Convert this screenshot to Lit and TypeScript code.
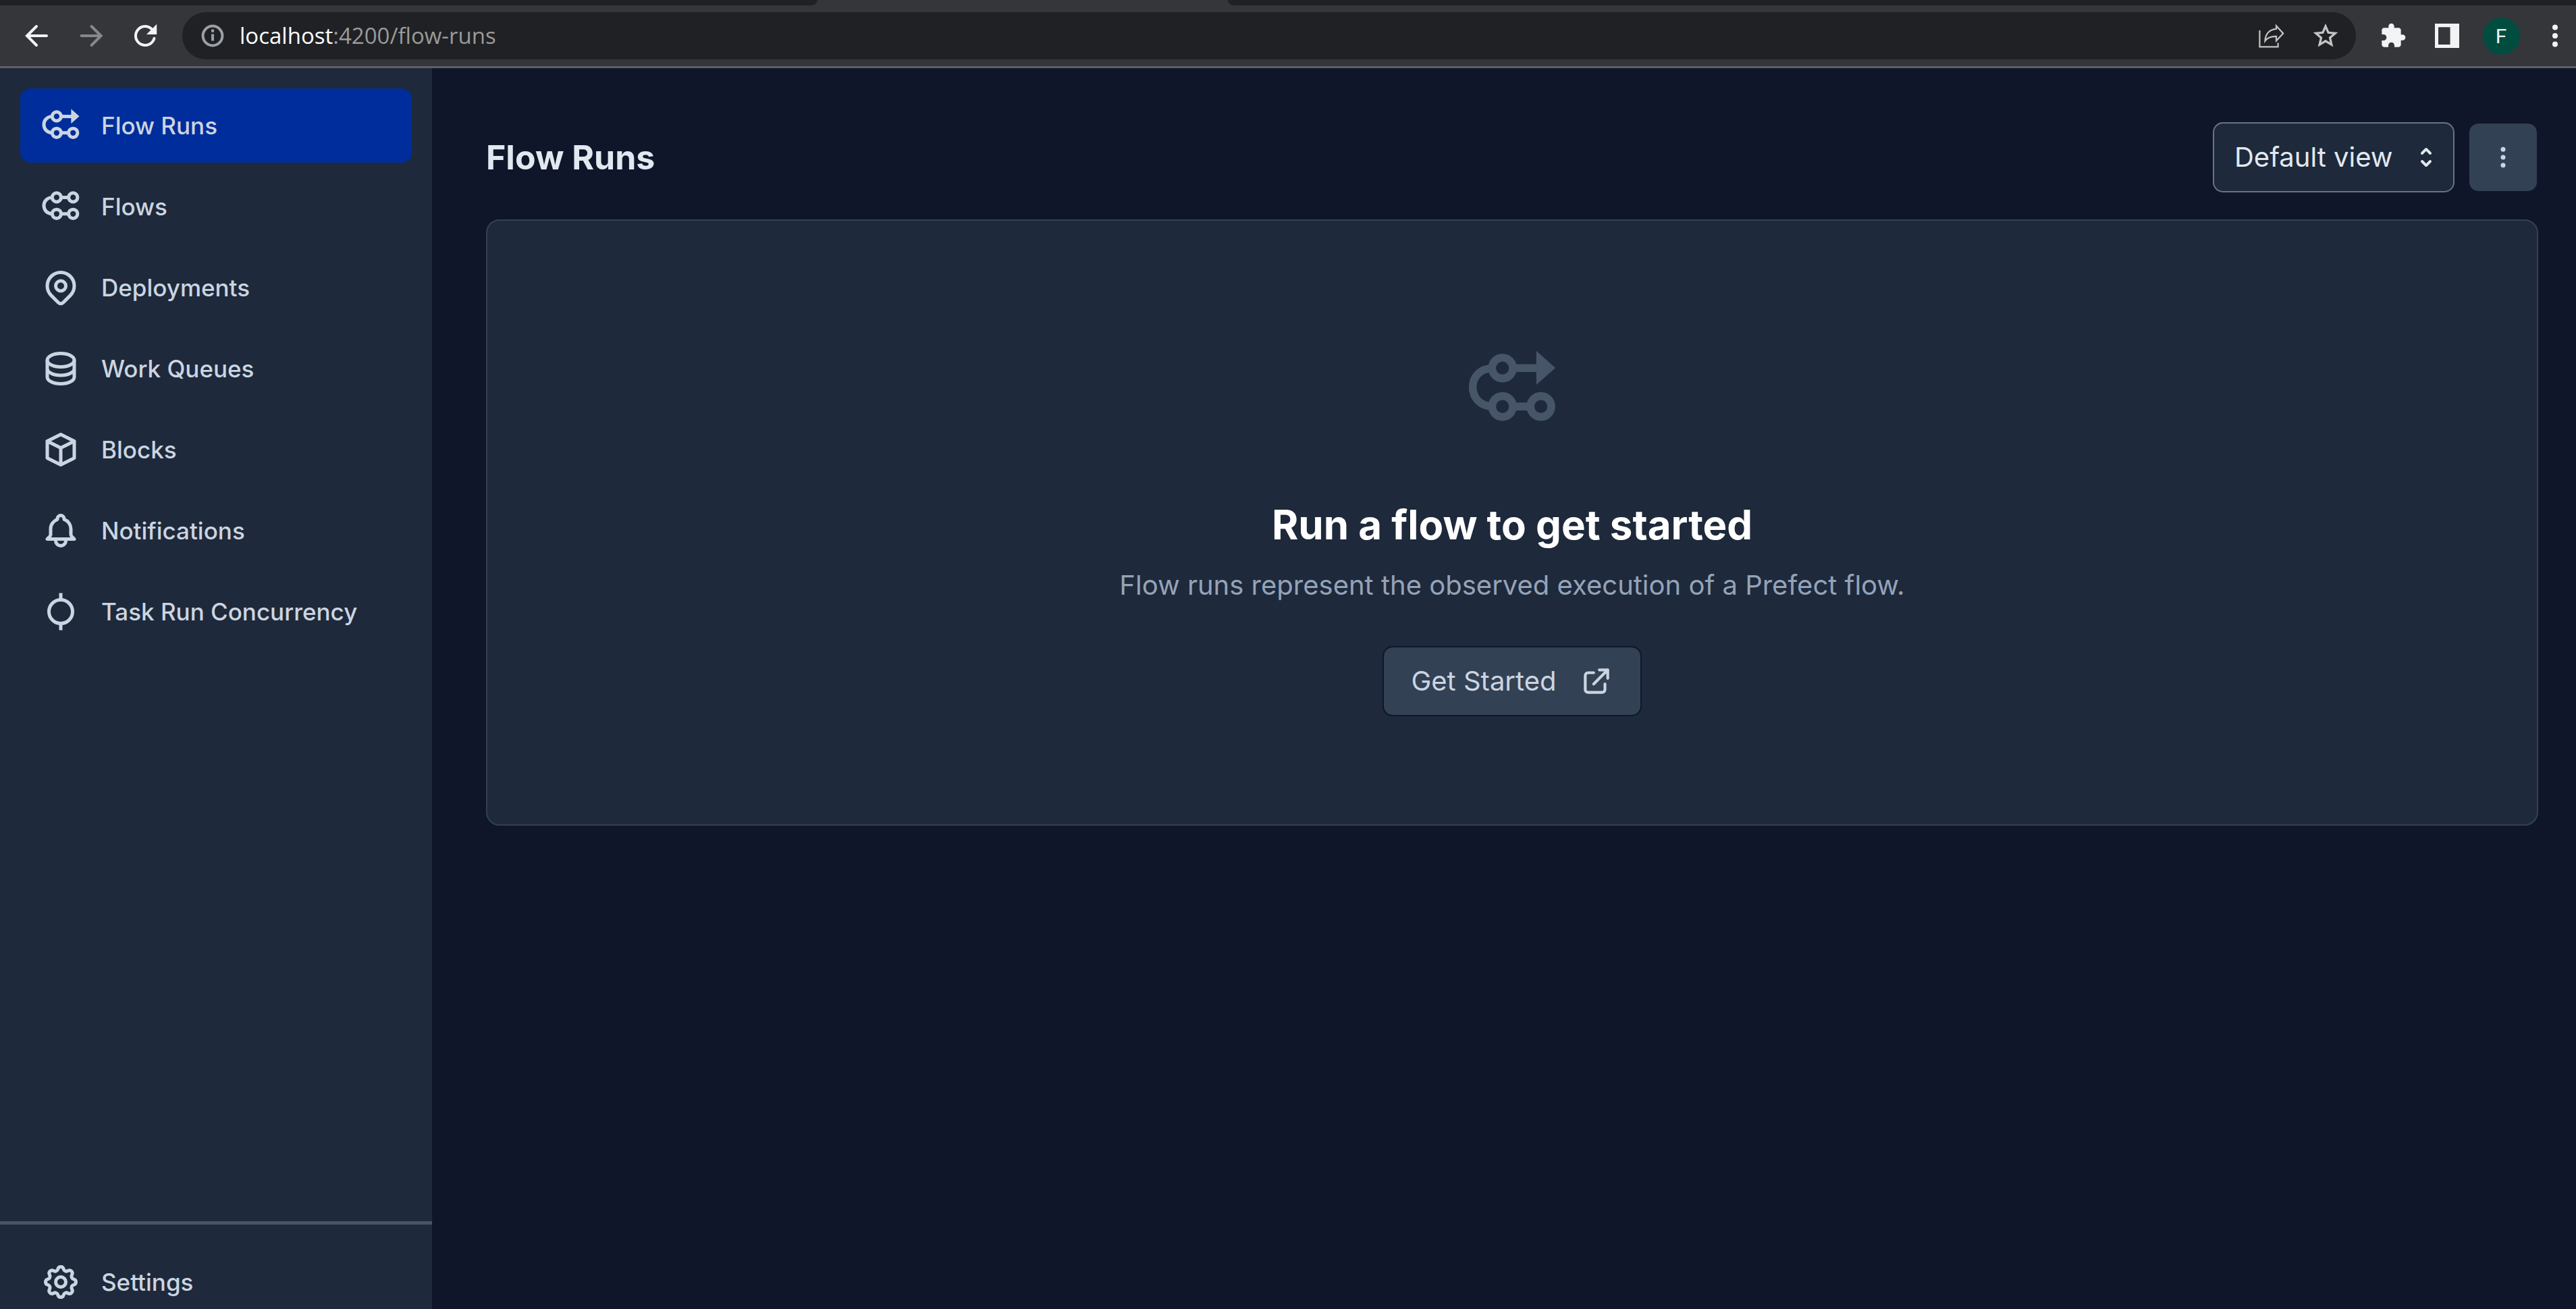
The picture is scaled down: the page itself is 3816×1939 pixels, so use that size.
import { LitElement, html, svg, css } from "lit";
import { customElement, property, state } from "lit/decorators.js";
import { classMap } from "lit/directives/class-map.js";

const flowRunsIcon = svg`
  <path d="M7 6.55C3.8 6.7 2 8.8 2 11.4s1.8 4.8 5 4.95M12 6.55h6.500M12 16.3h5" />
  <circle cx="9.55" cy="6.55" r="2.65" />
  <circle cx="9.55" cy="16.3" r="2.65" />
  <circle cx="19.3" cy="16.3" r="2.65" />
  <path d="M18.15 2.2 23 6.5l-4.85 4.3z" fill="currentColor" stroke="none" />`;

const flowsIcon = svg`
  <path d="M7 6.55C3.8 6.7 2 8.8 2 11.4s1.8 4.8 5 4.95M12 6.55h5M12 16.3h5" />
  <circle cx="9.55" cy="6.55" r="2.65" />
  <circle cx="19.3" cy="6.55" r="2.65" />
  <circle cx="9.55" cy="16.3" r="2.65" />
  <circle cx="19.3" cy="16.3" r="2.65" />`;

const pinIcon = svg`
  <path stroke-linecap="round" stroke-linejoin="round" d="M17.657 16.657 13.414 20.9a1.998 1.998 0 0 1-2.827 0l-4.244-4.243a8 8 0 1 1 11.314 0z" />
  <circle cx="12" cy="11" r="3" />`;

const databaseIcon = svg`
  <ellipse cx="12" cy="7" rx="8" ry="4" />
  <path d="M4 7v10c0 2.21 3.58 4 8 4s8-1.79 8-4V7M4 12c0 2.21 3.58 4 8 4s8-1.79 8-4" />`;

const cubeIcon = svg`
  <path stroke-linecap="round" stroke-linejoin="round" d="m20 7-8-4-8 4m16 0-8 4m8-4v10l-8 4m0-10L4 7m8 4v10M4 7v10l8 4" />`;

const bellIcon = svg`
  <path stroke-linecap="round" stroke-linejoin="round" d="M15 17h5l-1.405-1.405A2.032 2.032 0 0 1 18 14.158V11a6.002 6.002 0 0 0-4-5.659V5a2 2 0 1 0-4 0v.341C7.67 6.165 6 8.388 6 11v3.159c0 .538-.214 1.055-.595 1.436L4 17h5m6 0v1a3 3 0 1 1-6 0v-1m6 0H9" />`;

const concurrencyIcon = svg`
  <circle cx="12" cy="12" r="7" />
  <path d="M12 1v4M12 19v4" />`;

const gearIcon = svg`
  <path stroke-linecap="round" stroke-linejoin="round" d="M10.325 4.317c.426-1.756 2.924-1.756 3.35 0a1.724 1.724 0 0 0 2.573 1.066c1.543-.94 3.31.826 2.37 2.37a1.724 1.724 0 0 0 1.065 2.572c1.756.426 1.756 2.924 0 3.35a1.724 1.724 0 0 0-1.066 2.573c.94 1.543-.826 3.31-2.37 2.37a1.724 1.724 0 0 0-2.572 1.065c-.426 1.756-2.924 1.756-3.35 0a1.724 1.724 0 0 0-2.573-1.066c-1.543.94-3.31-.826-2.37-2.37a1.724 1.724 0 0 0-1.065-2.572c-1.756-.426-1.756-2.924 0-3.35a1.724 1.724 0 0 0 1.066-2.573c-.94-1.543.826-3.31 2.37-2.37.996.608 2.296.07 2.572-1.065z" />
  <circle cx="12" cy="12" r="3" />`;

const externalLinkIcon = svg`
  <path stroke-linecap="round" stroke-linejoin="round" d="M10 6H6a2 2 0 0 0-2 2v10a2 2 0 0 0 2 2h10a2 2 0 0 0 2-2v-4M14 4h6m0 0v6m0-6L10 14" />`;

const outline = (shape: unknown, cls = "icon") =>
  html`<svg class=${cls} viewBox="0 0 24 24" fill="none" stroke="currentColor" stroke-width="2" aria-hidden="true">${shape}</svg>`;

const solid = (shape: unknown, cls = "glyph") =>
  html`<svg class=${cls} viewBox="0 0 24 24" fill="currentColor" aria-hidden="true">${shape}</svg>`;

@customElement("browser-bar")
export class BrowserBar extends LitElement {
  static styles = css`
    :host {
      display: block;
      overflow: hidden;
      background: #35363a;
      border-bottom: 3px solid #5f6063;
    }
    .tabs {
      display: flex;
      height: 8px;
      overflow: hidden;
      background: #35363a;
    }
    .tab-before,
    .tab-after {
      background: #202124;
    }
    .tab-before {
      width: 1211px;
      border-bottom-right-radius: 12px 10px;
    }
    .tab-active {
      width: 608px;
    }
    .tab-after {
      flex: 1;
      border-bottom-left-radius: 12px 10px;
    }
    .bar {
      display: flex;
      align-items: center;
      height: 90px;
      padding-left: 15px;
    }
    button {
      display: grid;
      place-items: center;
      flex: none;
      width: 80px;
      height: 70px;
      padding: 0;
      border: 0;
      background: none;
      color: #f1f3f4;
    }
    button.muted {
      color: #86888a;
    }
    .glyph {
      width: 48px;
      height: 48px;
    }
    .star {
      width: 44px;
      height: 44px;
    }
    .puzzle {
      width: 40px;
      height: 40px;
    }
    .address {
      display: flex;
      flex: 1;
      align-items: center;
      height: 70px;
      margin: 0 15px;
      padding: 0 5px 0 21px;
      border-radius: 35px;
      background: #202124;
      color: #9aa0a6;
    }
    .address button {
      color: #c4c4c4;
    }
    .address .info {
      width: 48px;
      color: #9aa0a6;
    }
    .url {
      flex: 1;
      margin-left: 16px;
      font: 33px/48px "Segoe UI", "Open Sans", sans-serif;
      color: #9a9a9a;
      text-decoration: none;
    }
    .host {
      color: #ffffff;
    }
    .profile {
      display: grid;
      place-items: center;
      width: 55px;
      height: 55px;
      border-radius: 50%;
      background: #004d40;
      font: 30px/55px Roboto, sans-serif;
    }
    /* The last button reaches past the window's right edge. */
    .more {
      margin-right: -9px;
    }
  `;

  render() {
    return html`
      <div class="tabs">
        <div class="tab-before"></div>
        <div class="tab-active"></div>
        <div class="tab-after"></div>
      </div>
      <div class="bar">
        <button aria-label="Back">
          ${outline(svg`<path stroke-linecap="round" d="M19 12H4.800M11.500 5l-7 7 7 7" />`, "glyph")}
        </button>
        <button class="muted" aria-label="Forward">
          ${outline(svg`<path stroke-linecap="round" d="M4.800 12h14.200M12.300 5l7 7-7 7" />`, "glyph")}
        </button>
        <button aria-label="Reload">
          ${solid(svg`<path d="M17.65 6.35A7.96 7.96 0 0 0 12 4a8 8 0 1 0 7.73 10 1 1 0 0 0-1.98-.3A6 6 0 1 1 16.22 7.78L13 11h7.6V3.4z" />`)}
        </button>
        <div class="address">
          <button class="info" aria-label="Site information">
            ${outline(svg`<circle cx="12" cy="12" r="7.2" /><path d="M12 10.8v5M12 7.2v2.2" />`, "glyph")}
          </button>
          <a class="url" href="#flow-runs"><span class="host">localhost</span>:4200/flow-runs</a>
          <button aria-label="Share">
            <svg class="glyph" viewBox="0 0 24 24" fill="none" stroke="currentColor" stroke-width="1.1" aria-hidden="true">
              <path d="M3.200 8v12.200h13.600v-3" />
              <path d="M15.500 4.600 20.600 10.200l-5.100 5.500v-3.300c-3.600-.1-6.200.6-8.300 3.400.3-5.300 3.300-8.500 8.300-8.900z" />
            </svg>
          </button>
          <button aria-label="Bookmark">
            ${solid(
              svg`<path fill-rule="evenodd" d="m22 9.24-7.19-.62L12 2 9.19 8.63 2 9.24l5.46 4.73L5.82 21 12 17.27 18.18 21l-1.63-7.03zM12 15.1l-3.500 2.150.94-3.980-3.100-2.690 4.090-.35L12 6.500l1.600 3.740 4.080.35-3.100 2.690.94 3.980z" />`,
              "star"
            )}
          </button>
        </div>
        <button aria-label="Extensions">
          ${solid(
            svg`<path d="M20.5 11H19V7c0-1.1-.9-2-2-2h-4V3.500a2.500 2.500 0 0 0-5 0V5H4c-1.100 0-1.990.9-1.990 2v3.800H3.500c1.490 0 2.700 1.210 2.700 2.700s-1.210 2.700-2.700 2.700H2V20c0 1.100.9 2 2 2h3.800v-1.500c0-1.490 1.210-2.700 2.700-2.700 1.490 0 2.700 1.210 2.700 2.700V22H17c1.100 0 2-.9 2-2v-4h1.500a2.500 2.500 0 0 0 0-5z" />`,
            "puzzle"
          )}
        </button>
        <button aria-label="Side panel">
          ${solid(svg`<path fill-rule="evenodd" d="M3 3h18v18H3zM5.500 5.600v12.900h8.800v-12.900z" />`)}
        </button>
        <button aria-label="Profile"><span class="profile">F</span></button>
        <button class="more" aria-label="Browser menu">
          ${solid(svg`<circle cx="12" cy="5.750" r="2" /><circle cx="12" cy="12" r="2" /><circle cx="12" cy="18.250" r="2" />`)}
        </button>
      </div>
    `;
  }
}

@customElement("nav-item")
export class NavItem extends LitElement {
  @property() label = "";
  @property() href = "#";
  @property({ attribute: false }) icon: unknown;
  @property({ type: Boolean }) active = false;

  static styles = css`
    :host {
      display: block;
    }
    .item {
      display: flex;
      align-items: center;
      gap: 30px;
      height: 110px;
      padding: 0 30px;
      border-radius: 15px;
      color: #cbd5e1;
      font: 500 35px/50px Inter, sans-serif;
      text-decoration: none;
      white-space: nowrap;
    }
    .item.active {
      background: #002d9c;
    }
    .icon {
      flex: none;
      width: 60px;
      height: 60px;
    }
  `;

  render() {
    return html`
      <a
        class=${classMap({ item: true, active: this.active })}
        href=${this.href}
        aria-current=${this.active ? "page" : "false"}
      >
        ${outline(this.icon)}<span>${this.label}</span>
      </a>
    `;
  }
}

@customElement("app-root")
export class AppRoot extends LitElement {
  @state() private current = "Flow Runs";

  private readonly items = [
    { label: "Flow Runs", href: "#flow-runs", icon: flowRunsIcon },
    { label: "Flows", href: "#flows", icon: flowsIcon },
    { label: "Deployments", href: "#deployments", icon: pinIcon },
    { label: "Work Queues", href: "#work-queues", icon: databaseIcon },
    { label: "Blocks", href: "#blocks", icon: cubeIcon },
    { label: "Notifications", href: "#notifications", icon: bellIcon },
    { label: "Task Run Concurrency", href: "#concurrency", icon: concurrencyIcon },
  ];

  static styles = css`
    :host {
      display: block;
      height: 100vh;
      overflow: hidden;
      background: #101629;
      color: #e2e8f0;
      font-family: Inter, sans-serif;
    }
    /* The app is slightly taller than the window, so the sidebar runs past its lower edge. */
    .shell {
      display: flex;
      flex-direction: column;
      height: calc(100vh + 45px);
    }
    .app {
      display: flex;
      flex: 1;
    }
    .sidebar {
      display: flex;
      flex: none;
      flex-direction: column;
      justify-content: space-between;
      width: 640px;
      background: #1e293b;
    }
    .group {
      display: flex;
      flex-direction: column;
      gap: 10px;
      padding: 30px;
    }
    .footer {
      border-top: 5px solid #475569;
    }
    main {
      display: flex;
      flex: 1;
      flex-direction: column;
      gap: 40px;
      padding: 80px 56px 80px 80px;
    }
    header {
      display: flex;
      align-items: center;
      gap: 20px;
    }
    h1 {
      flex: 1;
      margin: 0;
      font-size: 50px;
      line-height: 70px;
      font-weight: 700;
    }
    .select {
      display: grid;
      align-items: center;
    }
    select,
    .chevrons {
      grid-area: 1 / 1;
    }
    select {
      appearance: none;
      width: 358px;
      height: 104px;
      padding: 0 30px;
      border: 2px solid #64748b;
      border-radius: 15px;
      background: #1e293b;
      color: #e2e8f0;
      font: 40px/60px Inter, sans-serif;
    }
    .chevrons {
      justify-self: end;
      width: 40px;
      height: 40px;
      margin-right: 22px;
      pointer-events: none;
    }
    .button {
      display: flex;
      align-items: center;
      justify-content: center;
      box-sizing: border-box;
      height: 104px;
      border: 2px solid #0f172a;
      border-radius: 15px;
      background: #334155;
      background-clip: padding-box;
      color: #cbd5e1;
      font: 40px/60px Inter, sans-serif;
      text-decoration: none;
    }
    .square {
      width: 104px;
      padding: 0;
    }
    .link {
      gap: 34px;
      padding: 0 40px;
    }
    .small {
      width: 50px;
      height: 50px;
    }
    .card {
      display: flex;
      flex-direction: column;
      align-items: center;
      padding: 180px 80px 160px;
      border: 2px solid #334155;
      border-radius: 20px;
      background: #1e293b;
      text-align: center;
    }
    .hero {
      width: 140px;
      height: 140px;
      color: #475569;
    }
    h2 {
      margin: 90px 0 20px;
      color: #ffffff;
      font-size: 60px;
      line-height: 80px;
      font-weight: 700;
    }
    .card p {
      margin: 0 0 60px;
      color: #94a3b8;
      font-size: 40px;
      line-height: 60px;
    }
  `;

  render() {
    return html`
      <div class="shell">
        <browser-bar></browser-bar>
        <div class="app">
          <nav class="sidebar" aria-label="Main">
            <div class="group">
              ${this.items.map(
                (item) => html`<nav-item
                  .label=${item.label}
                  .href=${item.href}
                  .icon=${item.icon}
                  .active=${item.label === this.current}
                  @click=${() => (this.current = item.label)}
                ></nav-item>`
              )}
            </div>
            <div class="group footer">
              <nav-item label="Settings" href="#settings" .icon=${gearIcon}></nav-item>
            </div>
          </nav>
          <main>
            <header>
              <h1>Flow Runs</h1>
              <div class="select">
                <select aria-label="Saved view">
                  <option>Default view</option>
                </select>
                <svg class="chevrons" viewBox="0 0 20 20" fill="currentColor" aria-hidden="true">
                  <path fill-rule="evenodd" d="M10 3a1 1 0 0 1 .707.293l3 3a1 1 0 0 1-1.414 1.414L10 5.414 7.707 7.707a1 1 0 0 1-1.414-1.414l3-3A1 1 0 0 1 10 3zm-3.707 9.293a1 1 0 0 1 1.414 0L10 14.586l2.293-2.293a1 1 0 0 1 1.414 1.414l-3 3a1 1 0 0 1-1.414 0l-3-3a1 1 0 0 1 0-1.414z" />
                </svg>
              </div>
              <button class="button square" aria-label="More actions">
                <svg class="small" viewBox="0 0 20 20" fill="currentColor" aria-hidden="true">
                  <circle cx="10" cy="5.300" r="1.400" /><circle cx="10" cy="10" r="1.400" /><circle cx="10" cy="14.700" r="1.400" />
                </svg>
              </button>
            </header>
            <section class="card">
              ${outline(flowRunsIcon, "hero")}
              <h2>Run a flow to get started</h2>
              <p>Flow runs represent the observed execution of a Prefect flow.</p>
              <a class="button link" href="#get-started">Get Started ${outline(externalLinkIcon, "small")}</a>
            </section>
          </main>
        </div>
      </div>
    `;
  }
}
